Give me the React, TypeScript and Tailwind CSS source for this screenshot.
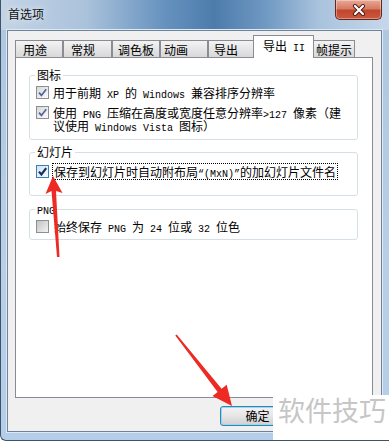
import React from 'react';

const CJK = /[\u2E80-\u9FFF\u3000-\u303F\uFF00-\uFFEF]/;
const SPLIT = /[\u2E80-\u9FFF\u3000-\u303F\uFF00-\uFFEF]+|[^\u2E80-\u9FFF\u3000-\u303F\uFF00-\uFFEF]+/g;

// SimSun-like mix: CJK at 12px, latin half-width (6px) in a serif mono
function Txt({ s }: { s: string }) {
  const parts = s.match(SPLIT) ?? [];
  return (
    <>
      {parts.map((p, i) =>
        CJK.test(p) ? (
          <span key={i}>{p}</span>
        ) : (
          <span key={i} className="whitespace-pre font-['Liberation_Mono',monospace] text-[10px] leading-[0]">{p}</span>
        )
      )}
    </>
  );
}

type BoxState = 'on' | 'focus' | 'off';

function Box({ state }: { state: BoxState }) {
  const cls =
    state === 'focus'
      ? 'border-[#3c7fb1] bg-linear-to-br from-[#cfe6f8] to-[#f4faff]'
      : state === 'off'
        ? 'border-[#8e8f8f] bg-linear-to-br from-[#c4c4c4] to-[#f3f3f3]'
        : 'border-[#8e8f8f] bg-linear-to-br from-[#d8d8d8] to-[#fbfbfb]';
  return (
    <span className={`flex h-[13px] w-[13px] shrink-0 items-center justify-center border ${cls}`}>
      {state !== 'off' && (
        <svg width="11" height="11" viewBox="0 0 11 11">
          <path
            d="M2 5.6 L4.4 8.4 L9.2 2.2"
            fill="none"
            stroke={state === 'focus' ? '#1b2f5e' : '#50649a'}
            strokeWidth={state === 'focus' ? 2.2 : 1.7}
          />
        </svg>
      )}
    </span>
  );
}

const tabs = [
  { label: '用途', w: 'w-[48px]', pl: 'pl-[7px]' },
  { label: '常规', w: 'w-[49px]', pl: 'pl-[7px]' },
  { label: '调色板', w: 'w-[48px]', pl: 'pl-[5px]' },
  { label: '动画', w: 'w-[48px]', pl: 'pl-[3px]' },
  { label: '导出', w: 'w-[47px]', pl: 'pl-[5px]' },
  { label: '导出 II', w: 'w-[61px]', pl: 'pl-[9px]', active: true },
  { label: '帧提示', w: 'w-[43px]', pl: 'pl-[3px]' },
];

function Group({ title, children, className = '' }: { title: string; children: React.ReactNode; className?: string }) {
  return (
    <fieldset className={`rounded-[3px] border border-[#d5dfe5] ${className}`}>
      <legend className="ml-[5px] h-[14px] px-[2px] leading-[14px] text-black">
        <Txt s={title} />
      </legend>
      {children}
    </fieldset>
  );
}

export default function App() {
  return (
    <div className="relative h-[441px] w-[389px] overflow-hidden rounded-bl-[6px] border-b border-l border-[#3f5368] bg-[linear-gradient(180deg,#aec6e0_0%,#b9cfe7_60%,#b4cde8_100%)] font-['Noto_Sans_CJK_SC',sans-serif] text-[12px] leading-[13px] text-black">
      <div className="flex h-full flex-col">
        {/* Title bar */}
        <div className="flex h-[30px] items-center bg-[linear-gradient(90deg,#c4d4e6_0%,#aac2db_22%,#6792bf_42%,#4d7cab_55%,#6f98c2_68%,#a9c3dd_82%,#c6d7ea_100%)] pb-[2px] pl-[7px]">
          <span className="leading-[14px] text-[#111] [text-shadow:0_0_6px_rgba(255,255,255,0.9)]">首选项</span>
        </div>

        {/* Frame + client */}
        <div className="flex flex-1 pb-[8px] pl-[6px] pr-[7px]">
          <div className="flex flex-1 flex-col border border-[#6f8399] bg-[#f0f0f0] shadow-[0_0_0_1px_#dce8f4]">
            {/* Tab strip */}
            <div className="flex h-[26px] items-end pl-[7px] pt-[4px]">
              {tabs.map((t) =>
                t.active ? (
                  <div
                    key={t.label}
                    className={`relative z-10 -mx-[2px] -mb-px flex h-[23px] shrink-0 items-start border-x border-t border-[#898c95] bg-white pt-[3px] ${t.w} ${t.pl}`}
                  >
                    <span className="h-[13px]"><Txt s={t.label} /></span>
                  </div>
                ) : (
                  <div
                    key={t.label}
                    className={`flex h-[17px] shrink-0 items-start border-x border-t border-[#898c95] bg-linear-to-b from-[#f3f3f3] to-[#d8d8d8] pt-[2px] ${t.w} ${t.pl}`}
                  >
                    <span className="h-[13px]"><Txt s={t.label} /></span>
                  </div>
                )
              )}
            </div>

            {/* Tab panel */}
            <div className="ml-[7px] mr-[8px] flex h-[341px] flex-col border border-[#898c95] bg-white pl-[13px] pr-[14px] pt-[10px]">
              <Group title="图标">
                <div className="flex items-start gap-[4px] pl-[6px] pt-[4px]">
                  <Box state="on" />
                  <span><Txt s="用于前期 XP 的 Windows 兼容排序分辨率" /></span>
                </div>
                <div className="flex items-start gap-[4px] pb-[7px] pl-[6px] pt-[7px]">
                  <Box state="on" />
                  <span>
                    <Txt s="使用 PNG 压缩在高度或宽度任意分辨率>127 像素（建" />
                    <br />
                    <Txt s="议使用 Windows Vista 图标）" />
                  </span>
                </div>
              </Group>

              <Group title="幻灯片" className="mt-[5px]">
                <div className="flex items-start gap-[5px] pb-[17px] pl-[6px] pt-[6px]">
                  <Box state="focus" />
                  <span className="outline-1 outline-offset-[1px] outline-dotted outline-black">
                    <Txt s="保存到幻灯片时自动附布局“(MxN)”的加幻灯片文件名" />
                  </span>
                </div>
              </Group>

              <Group title="PNG" className="mt-[6px]">
                <div className="flex items-start gap-[5px] pb-[6px] pl-[6px] pt-[4px]">
                  <Box state="off" />
                  <span><Txt s="始终保存 PNG 为 24 位或 32 位色" /></span>
                </div>
              </Group>
            </div>

            {/* Buttons */}
            <div className="flex pl-[212px] pt-[8px]">
              <button className="flex h-[20px] w-[75px] items-center justify-center rounded-[3px] border border-[#3c7fb1] bg-linear-to-b from-[#f2f2f2] via-[#e6e6e6] to-[#cfcfcf] leading-[14px] shadow-[inset_0_0_0_1px_#8fdcf8]">
                确定
              </button>
            </div>
          </div>
        </div>
      </div>

      {/* Close button */}
      <div className="absolute left-[334px] top-0 flex h-[20px] w-[47px] items-center justify-center rounded-b-[5px] border border-t-0 border-[#6b2418] bg-[linear-gradient(180deg,#e9a996_0%,#d67b64_45%,#c2462e_55%,#c85a3f_100%)] shadow-[inset_0_0_0_1px_rgba(255,255,255,0.35)]">
        <svg width="14" height="12" viewBox="0 0 14 12">
          <path d="M3 2 L11 10 M11 2 L3 10" stroke="#4a1b12" strokeWidth="4" strokeLinecap="round" />
          <path d="M3 2 L11 10 M11 2 L3 10" stroke="#ffffff" strokeWidth="2.2" strokeLinecap="round" />
        </svg>
      </div>

      {/* Red annotation arrows */}
      <svg className="pointer-events-none absolute left-0 top-0" width="389" height="441" viewBox="0 0 389 441">
        <polygon points="52,176 44.5,194 50.5,191 56,257 58.5,257 55,191 61.5,193" fill="#ee2a24" />
        <polygon points="231,406 211.5,396 216.6,391.9 174.3,335.6 175.7,334.4 220.6,388.8 225.7,384.7" fill="#ee2a24" />
      </svg>

      {/* Watermark */}
      <div className="absolute left-[272px] top-[395px] h-[46px] w-[117px] bg-white pl-[5px] pt-[1px] text-[27px] leading-[28px] text-[#c6c6c6]">
        软件技巧
      </div>
    </div>
  );
}
